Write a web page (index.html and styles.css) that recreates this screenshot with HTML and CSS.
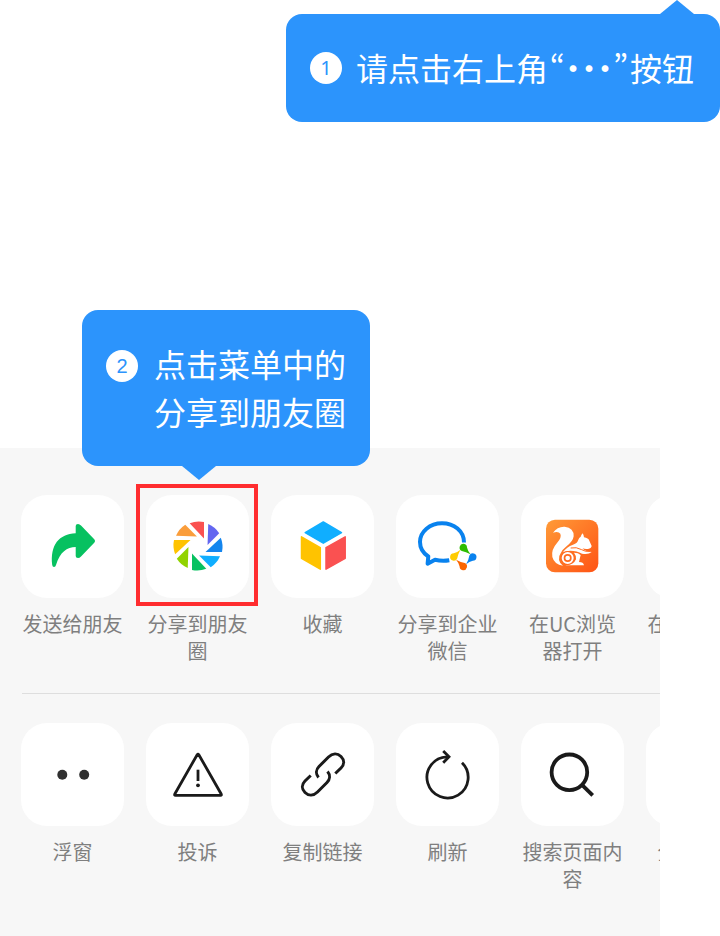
FILE: index.html
```html
<!DOCTYPE html>
<html lang="zh-CN">
<head>
<meta charset="utf-8">
<meta name="viewport" content="width=device-width, initial-scale=1">
<title>分享到朋友圈</title>
<link rel="stylesheet" href="styles.css">
</head>
<body>
<main class="guide">
  <section class="bubble bubble-up">
    <span class="badge">1</span>
    <p class="bubble-text">请点击右上角<span class="quoted"><span>“</span><span class="dot">·</span><span class="dot">·</span><span class="dot">·</span><span>”</span></span>按钮</p>
  </section>

  <div class="sheet-area">
    <section class="bubble bubble-down">
      <span class="badge badge-two">2</span>
      <p class="bubble-text">点击菜单中的<br>分享到朋友圈</p>
    </section>

    <div class="sheet">
      <div class="row">
        <button class="item" type="button">
          <span class="tile">
            <svg viewBox="0 0 103 103" aria-hidden="true"><path fill="#07c160" d="M54.7 38.3V31Q54.7 29 57 29Q58.600 29 60 30.500L73 44Q75 46 73 48L60 61.500Q58.600 63 57 63Q54.700 63 54.700 61V52C46 52 39 57 35 70Q34.500 72 33 72Q31.500 72 31.200 70C29 50 38 39 54.700 38.300Z"/></svg>
          </span>
          <span class="label">发送给朋友</span>
        </button>
        <button class="item" type="button">
          <span class="tile tile-marked">
            <svg viewBox="0 0 103 103" aria-hidden="true">
              <defs><path id="blade" d="M-8.300-22.800A24.600 24.600 0 0 1 6-24L6-7.500Z"/></defs>
              <g transform="translate(52 51)">
                <use href="#blade" fill="#fa5151"/>
                <use href="#blade" fill="#6467f0" transform="rotate(45)"/>
                <use href="#blade" fill="#1485ee" transform="rotate(90)"/>
                <use href="#blade" fill="#10aeff" transform="rotate(135)"/>
                <use href="#blade" fill="#07c160" transform="rotate(180)"/>
                <use href="#blade" fill="#91d300" transform="rotate(225)"/>
                <use href="#blade" fill="#ffc300" transform="rotate(270)"/>
                <use href="#blade" fill="#fa9d3b" transform="rotate(315)"/>
              </g>
            </svg>
          </span>
          <span class="label">分享到朋友圈</span>
        </button>
        <button class="item" type="button">
          <span class="tile">
            <svg viewBox="0 0 103 103" aria-hidden="true" stroke-linejoin="round" stroke-width="1.500">
              <path fill="#10aeff" stroke="#10aeff" d="M52.300 27L70.500 37.700L52.300 48.200L34.200 37.700Z"/>
              <path fill="#ffc300" stroke="#ffc300" d="M30.500 41.800L49.300 52.700V74.200L30.500 63.300Z"/>
              <path fill="#fa5151" stroke="#fa5151" d="M55 52.700L74.200 41.800V63.300L55 74.200Z"/>
            </svg>
          </span>
          <span class="label">收藏</span>
        </button>
        <button class="item" type="button">
          <span class="tile">
            <svg viewBox="0 0 103 103" aria-hidden="true">
              <path fill="none" stroke="#0982ee" stroke-width="4" stroke-linejoin="round" d="M68 47.500C68 36 58 28.300 46 28.300C34 28.300 24 36.500 24 47C24 53.500 27 58 32.300 61.500L31.600 68.700L39 64.800Q46 66.500 53.300 65.300"/>
              <defs><path id="drop" d="M3.700-9.500A3.700 3.700 0 1 0-1.500-6.100Q2.500-5.500 7.200-2.800Q4.500-6 3.700-9.500Z"/></defs>
              <g transform="translate(67.300 62)">
                <use href="#drop" fill="#2dbc00"/>
                <use href="#drop" fill="#0982ee" transform="rotate(90)"/>
                <use href="#drop" fill="#fb6500" transform="rotate(180)"/>
                <use href="#drop" fill="#ffcc00" transform="rotate(270)"/>
              </g>
            </svg>
          </span>
          <span class="label">分享到企业微信</span>
        </button>
        <button class="item" type="button">
          <span class="tile">
            <svg viewBox="18 15 309 309" aria-hidden="true">
              <defs><linearGradient id="amber" x1="0" y1="0" x2="1" y2="1"><stop offset="0" stop-color="#ff9b38"/><stop offset="1" stop-color="#ff5314"/></linearGradient></defs>
              <rect x="93" y="89" width="157" height="158" rx="27" fill="url(#amber)"/>
              <path fill="#fff" d="M114 128Q127 109 149 110Q177 113 176 139Q174 155 153 170Q141 179 137 190A25 25 0 0 0 144 227Q118 224 112 201Q108 179 126 159Q141 142 136 131Q130 123 114 128Z"/>
              <path fill="#fff" d="M197 140Q199 134 203 130Q206 135 207 142Q220 144 223 152L230 168Q229 175 219 177Q208 178 203 175Q209 185 230 186Q220 195 201 191Q186 182 166 182Q153 182 144 187Q155 170 174 164Q188 159 190 149Q192 143 197 140Z"/>
              <path fill="none" stroke="#ff6b20" stroke-width="3" d="M167 174Q184 170 200 179Q211 186 226 184"/>
              <path fill="#fff" d="M177 188Q190 188 197 195Q194 207 192 216Q205 216 207 226H151Q177 224 183 208Q184 196 177 188Z"/>
              <circle cx="158" cy="204" r="21" fill="#ff6b20"/>
              <circle cx="158" cy="204" r="15" fill="none" stroke="#fff" stroke-width="6"/>
              <circle cx="158" cy="204" r="7" fill="#fff"/>
            </svg>
          </span>
          <span class="label">在UC浏览器打开</span>
        </button>
        <button class="item" type="button">
          <span class="tile"></span>
          <span class="label">在浏览器打开</span>
        </button>
      </div>

      <hr class="divider">

      <div class="row">
        <button class="item" type="button">
          <span class="tile">
            <svg viewBox="0 0 103 103" aria-hidden="true" fill="#303030"><circle cx="41.300" cy="51.700" r="5"/><circle cx="63.200" cy="51.700" r="5"/></svg>
          </span>
          <span class="label">浮窗</span>
        </button>
        <button class="item" type="button">
          <span class="tile">
            <svg viewBox="0 0 103 103" aria-hidden="true" fill="none" stroke="#1a1a1a" stroke-width="2.800" stroke-linejoin="round"><path d="M51.200 31.700Q52 30.600 52.800 31.700L75.200 71Q75.800 72.400 74.500 72.400H29.500Q28.200 72.400 28.800 71Z"/><path d="M52 46.700V58"/><circle cx="52" cy="62.300" r="1.900" fill="#1a1a1a" stroke="none"/></svg>
          </span>
          <span class="label">投诉</span>
        </button>
        <button class="item" type="button">
          <span class="tile">
            <svg viewBox="0 0 103 103" aria-hidden="true" fill="none" stroke="#1a1a1a" stroke-width="3"><path id="loop" d="M47.500 54.500C44.500 51 45 46.500 48 43.500L57.500 34C61.500 30 66.500 30 70 33.500C73.500 37 73.500 41.500 70 45L64.300 50.500"/><use href="#loop" transform="rotate(180 52 51.500)"/></svg>
          </span>
          <span class="label">复制链接</span>
        </button>
        <button class="item" type="button">
          <span class="tile">
            <svg viewBox="0 0 103 103" aria-hidden="true" fill="none" stroke="#1a1a1a" stroke-width="2.800"><path d="M66 39.700A20.600 20.600 0 1 1 51 33.800H53"/><path d="M47.200 28L53 33.800L47.200 39.800"/></svg>
          </span>
          <span class="label">刷新</span>
        </button>
        <button class="item" type="button">
          <span class="tile">
            <svg viewBox="0 0 103 103" aria-hidden="true" fill="none" stroke="#1a1a1a" stroke-width="3.800"><circle cx="48.400" cy="49.300" r="17.800"/><path d="M61 61.800L71.700 72.300"/></svg>
          </span>
          <span class="label">搜索页面内容</span>
        </button>
        <button class="item" type="button">
          <span class="tile"></span>
          <span class="label">全文翻译</span>
        </button>
      </div>
    </div>
  </div>
</main>
</body>
</html>
```
FILE: styles.css
```css
* {
  box-sizing: border-box;
}

body {
  margin: 0;
  background: #fff;
  font-family: "Noto Sans CJK SC", sans-serif;
}

.guide {
  display: flex;
  flex-direction: column;
  min-height: 100vh;
  padding-top: 14px;
}

/* Step bubbles */
.bubble {
  position: relative;
  display: flex;
  align-items: flex-start;
  gap: 16px;
  padding: 29px 24px 31px;
  border-radius: 16px;
  background: #2c94fc;
  color: #fff;
}

.bubble::after {
  content: "";
  position: absolute;
  width: 34px;
  height: 14px;
  background: inherit;
}

.bubble-up {
  align-self: flex-end;
  gap: 14px;
  padding-right: 26px;
}

.bubble-up::after {
  right: 26px;
  bottom: 100%;
  clip-path: polygon(50% 0, 100% 100%, 0 100%);
}

.bubble-down {
  position: absolute;
  left: 82px;
  top: -138px;
  z-index: 2;
}

.bubble-down::after {
  left: 100px;
  top: 100%;
  clip-path: polygon(0 0, 100% 0, 50% 100%);
}

.badge {
  flex: none;
  width: 32px;
  margin-top: 9px;
  border-radius: 50%;
  background: #fff;
  color: #2c94fc;
  font-family: "Noto Sans", sans-serif;
  font-size: 20px;
  line-height: 32px;
  text-align: center;
}

.badge-two {
  margin-top: 11px;
  font-family: "Liberation Sans", sans-serif;
}

.bubble-text {
  margin: 0;
  font-size: 32px;
  line-height: 48px;
  white-space: nowrap;
}

.quoted {
  display: inline-flex;
  justify-content: center;
  width: 82px;
  font-feature-settings: "pwid";
}

.dot {
  display: flex;
  justify-content: center;
  width: 16px;
}

/* Share sheet */
.sheet-area {
  position: relative;
  display: flex;
  flex: 1;
  margin: 326px 60px 0 0;
}

.sheet {
  flex: 1;
  min-width: 0;
  padding: 47px 0;
  overflow: hidden;
  background: #f7f7f7;
}

.row {
  display: flex;
  align-items: flex-start;
  gap: 22px;
  padding-left: 21px;
}

.item {
  flex: none;
  width: 103px;
  padding: 0;
  border: 0;
  background: none;
  color: #7f7f7f;
  font: inherit;
  cursor: pointer;
}

.tile {
  position: relative;
  display: block;
  height: 103px;
  border-radius: 26px;
  background: #fff;
}

.tile svg {
  display: block;
  width: 100%;
  height: 100%;
}

.tile-marked::after {
  content: "";
  position: absolute;
  inset: -11px -9px -8px -10px;
  border: 4px solid #ff2d2f;
}

.label {
  display: block;
  margin-top: 12px;
  font-size: 20px;
  line-height: 27px;
  text-align: center;
}

.divider {
  height: 1px;
  margin: 29px 0 29px 22px;
  border: 0;
  background: #dedede;
}
```
